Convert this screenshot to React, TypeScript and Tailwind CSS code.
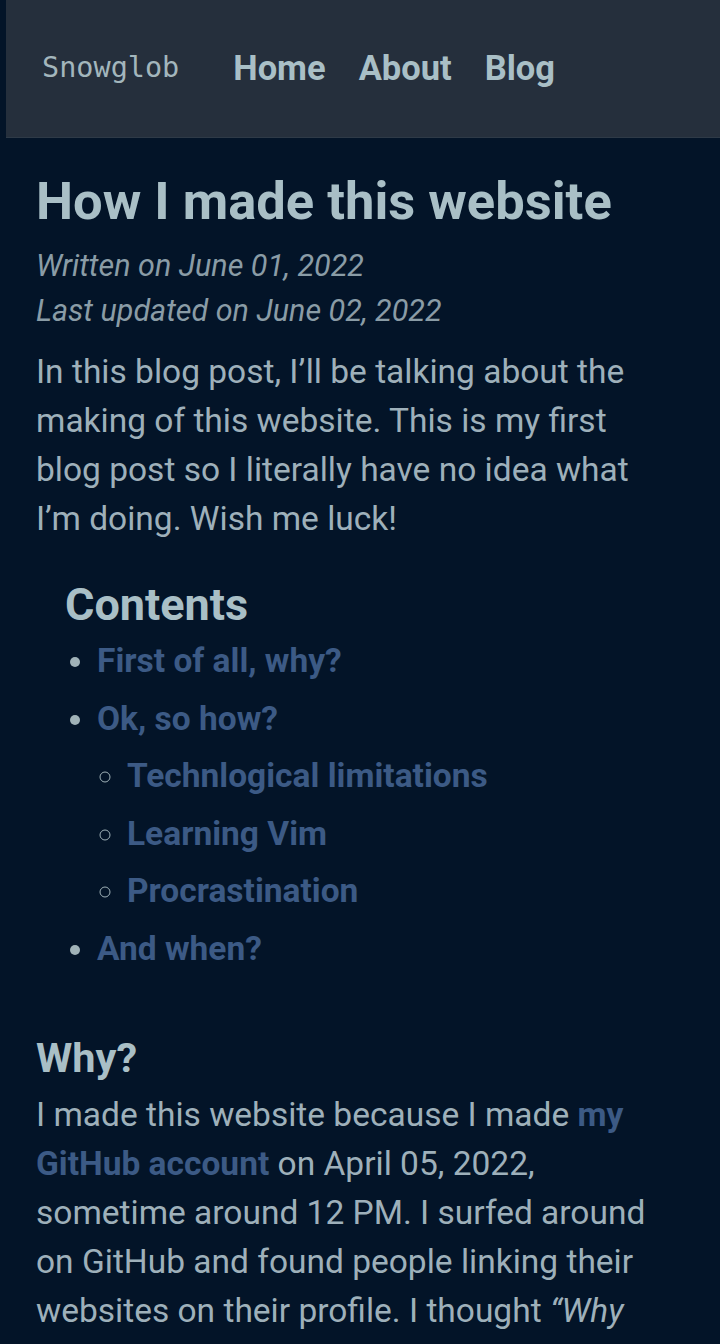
const TOC = [
  { label: "First of all, why?", children: [] as string[] },
  { label: "Ok, so how?", children: ["Technlogical limitations", "Learning Vim", "Procrastination"] },
  { label: "And when?", children: [] as string[] },
];

function NavBar() {
  return (
    <header className="ml-[6px] h-[138px] bg-[#252f3c] border-b border-[#2e3a47] flex items-center pl-[36px]">
      <span className="font-['DejaVu_Sans_Mono',monospace] text-[28.5px] text-[#a3b6bc] mr-[54px]">
        Snowglob
      </span>
      <nav className="flex gap-[33px] text-[34.5px] font-bold text-[#a9bfc6]">
        <a href="#">Home</a>
        <a href="#">About</a>
        <a href="#">Blog</a>
      </nav>
    </header>
  );
}

export default function App() {
  return (
    <div className="min-h-screen bg-[#031428] font-['Roboto',sans-serif] text-[#9eb0ba]">
      <NavBar />
      <main className="pl-[36px] pr-[64px] pt-[31px]">
        <h1 className="text-[52.5px] font-bold leading-[64px] text-[#a9bfc6]">How I made this website</h1>
        <div className="mt-[10px] italic text-[30.5px] leading-[45px] text-[#8a9ca6]">
          <p>Written on June 01, 2022</p>
          <p>Last updated on June 02, 2022</p>
        </div>
        <p className="mt-[14px] text-[33.5px] leading-[49px]">
          In this blog post, I’ll be talking about the making of this website. This is my first blog
          post so I literally have no idea what I’m doing. Wish me luck!
        </p>

        <section className="mt-[35px] pl-[29px]">
          <h2 className="text-[45px] font-bold leading-[54px] text-[#a9bfc6]">Contents</h2>
          <ul className="list-disc pl-[32px] text-[33.5px] font-bold leading-[57.6px] marker:text-[#a0b2b8]">
            {TOC.map((item) => (
              <li key={item.label}>
                <a href="#" className="text-[#3c5a85]">{item.label}</a>
                {item.children.length > 0 && (
                  <ul className="list-[circle] pl-[30px]">
                    {item.children.map((c) => (
                      <li key={c}>
                        <a href="#" className="text-[#3c5a85]">{c}</a>
                      </li>
                    ))}
                  </ul>
                )}
              </li>
            ))}
          </ul>
        </section>

        <h2 className="mt-[55px] mb-[7px] text-[41.5px] font-bold leading-[50px] text-[#a9bfc6]">Why?</h2>
        <p className="text-[33.5px] leading-[49px]">
          I made this website because I made{" "}
          <a href="#" className="font-bold text-[#3c5a85]">my GitHub account</a> on April 05, 2022,
          sometime around 12 PM. I surfed around on GitHub and found people linking their websites on
          their profile. I thought <em>“Why not make one myself?”</em> And so I did.
        </p>
      </main>
    </div>
  );
}
